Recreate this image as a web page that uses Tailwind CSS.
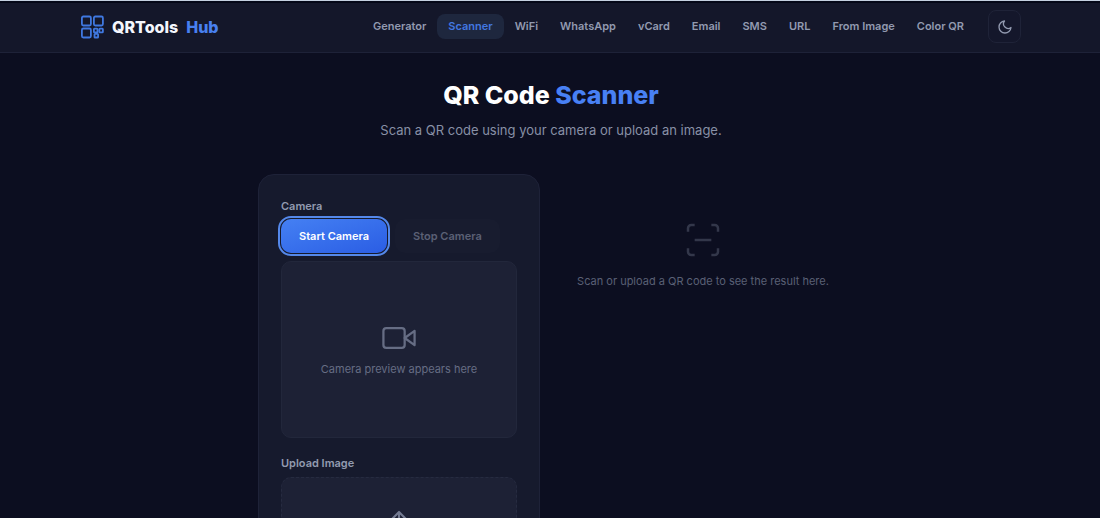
<!DOCTYPE html>
<html lang="en">
<head>
<meta charset="utf-8">
<meta name="viewport" content="width=device-width, initial-scale=1">
<title>QR Code Scanner</title>
<script src="https://cdn.jsdelivr.net/npm/@tailwindcss/browser@4"></script>
</head>
<body class="min-h-screen border-t border-[#c5d0e0] bg-[#0c0e20] font-['Inter',sans-serif] text-[#929ab0]">
<header class="border-t-2 border-b border-t-[#050818] border-b-[#1e2238] bg-[#14172a]">
  <div class="flex h-[49px] items-center justify-between pr-[79px] pb-0.5 pl-20">
    <a href="#" class="flex items-center gap-2 text-base font-extrabold text-[#f4f6fd]">
      <svg class="size-6" viewBox="0 0 24 24" fill="none" stroke="#3f78e0" stroke-width="1.8" aria-hidden="true">
        <rect x="1.9" y="1.5" width="9" height="9" rx="1.4"/><rect x="13.9" y="1.5" width="9" height="9" rx="1.4"/><rect x="1.9" y="13.5" width="9" height="9" rx="1.4"/>
        <rect x="13.9" y="13.7" width="3.6" height="3.6" rx=".6"/><rect x="19.3" y="13.7" width="3.6" height="3.6" rx=".6"/><rect x="14.5" y="18.9" width="3.6" height="3.6" rx=".6"/>
      </svg>
      <span>QRTools</span><span class="text-[#4880f0]">Hub</span>
    </a>
    <div class="flex items-center gap-[13px]">
      <nav class="flex text-[11px] leading-[17px] font-semibold whitespace-nowrap">
        <a href="#" class="rounded-lg px-[11px] py-1">Generator</a>
        <a href="#" aria-current="page" class="rounded-lg bg-[#1e273e] px-[11px] py-1 text-[#4277e0]">Scanner</a>
        <a href="#" class="rounded-lg px-[11px] py-1">WiFi</a>
        <a href="#" class="rounded-lg px-[11px] py-1">WhatsApp</a>
        <a href="#" class="rounded-lg px-[11px] py-1">vCard</a>
        <a href="#" class="rounded-lg px-[11px] py-1">Email</a>
        <a href="#" class="rounded-lg px-[11px] py-1">SMS</a>
        <a href="#" class="rounded-lg px-[11px] py-1">URL</a>
        <a href="#" class="rounded-lg px-[11px] py-1">From Image</a>
        <a href="#" class="rounded-lg px-[11px] py-1">Color QR</a>
      </nav>
      <button type="button" aria-label="Toggle theme" class="grid size-[33px] place-items-center rounded-lg border border-[#1f2338] bg-[#14172b]">
        <svg class="size-4" viewBox="0 0 24 24" fill="none" stroke="currentColor" stroke-width="2" stroke-linecap="round" stroke-linejoin="round" aria-hidden="true"><path d="M21 12.79A9 9 0 1 1 11.21 3 7 7 0 0 0 21 12.79z"/></svg>
      </button>
    </div>
  </div>
</header>
<main class="mx-auto w-[584px] max-w-full pt-6">
  <div class="pl-0.5 text-center">
    <h1 class="text-[25px] leading-9 font-extrabold text-white">QR Code <span class="text-[#4880f4]">Scanner</span></h1>
    <p class="mt-[7px] text-[13px] leading-5 text-[#8890a6]">Scan a QR code using your camera or upload an image.</p>
  </div>
  <div class="mt-[34px] grid grid-cols-2 items-start gap-5">
    <section class="rounded-2xl border border-[#1e2238] bg-[#161a2d] px-[22px] py-[23px]">
      <h2 class="text-[11px] leading-4 font-semibold">Camera</h2>
      <div class="mt-[5px] flex gap-2 text-[11px] font-semibold">
        <button type="button" class="h-[34px] rounded-[10px] bg-linear-to-br from-[#4580f3] to-[#2b5de4] px-[18px] text-white outline-2 outline-offset-1 outline-[#5488ea]">Start Camera</button>
        <button type="button" disabled class="h-[34px] rounded-[10px] bg-[#181c2f] px-[18px] text-[#5b6075]">Stop Camera</button>
      </div>
      <div class="mt-2 flex h-[177px] flex-col items-center justify-center rounded-[10px] border border-[#22273b] bg-[#1d2135] text-[#666d84]">
        <svg class="size-[34px]" viewBox="0 0 24 24" fill="none" stroke="currentColor" stroke-width="1.6" stroke-linecap="round" stroke-linejoin="round" aria-hidden="true"><rect x="1" y="5" width="15" height="14" rx="2"/><path d="m23 7-7 5 7 5V7z"/></svg>
        <p class="mt-1 text-[11px] leading-5">Camera preview appears here</p>
      </div>
      <h2 id="upload-title" class="mt-[17px] text-[11px] leading-4 font-semibold">Upload Image</h2>
      <label class="mt-1.5 flex h-28 justify-center rounded-[10px] border border-dashed border-[#262b40] bg-[#1d2135] pt-[30px] text-[#747b92]">
        <input type="file" accept="image/*" aria-labelledby="upload-title" class="sr-only">
        <svg class="size-8" viewBox="0 0 24 24" fill="none" stroke="currentColor" stroke-width="1.6" stroke-linecap="round" stroke-linejoin="round" aria-hidden="true"><path d="M21 15v4a2 2 0 0 1-2 2H5a2 2 0 0 1-2-2v-4M17 8l-5-5-5 5M12 3v12"/></svg>
      </label>
    </section>
    <section class="flex flex-col items-center pt-[46px] pl-1 text-[#5a6075]">
      <svg class="size-10 text-[#33374a]" viewBox="0 0 24 24" fill="none" stroke="currentColor" stroke-width="1.5" stroke-linecap="butt" stroke-linejoin="round" aria-hidden="true"><path d="M3 7V5a2 2 0 0 1 2-2h2M17 3h2a2 2 0 0 1 2 2v2M21 17v2a2 2 0 0 1-2 2h-2M7 21H5a2 2 0 0 1-2-2v-2M7 12h10"/></svg>
      <p class="mt-[11px] text-[11px] leading-5 whitespace-nowrap">Scan or upload a QR code to see the result here.</p>
    </section>
  </div>
</main>
</body>
</html>
